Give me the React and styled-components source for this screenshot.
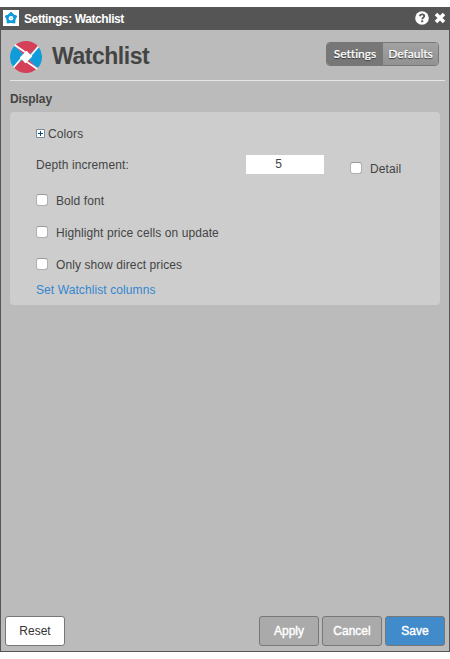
import React, { useState } from "react";
import styled, { createGlobalStyle } from "styled-components";

const Global = createGlobalStyle`
  * { box-sizing: border-box; }
  body { margin: 0; background: #fff; font: 12px/16px "Liberation Sans", Arial, sans-serif; color: #444; }
  button, input { font: inherit; }
`;

const Dialog = styled.div`
  display: flex;
  flex-direction: column;
  width: 450px;
  height: 645px;
  margin-top: 7px;
  border: 1px solid #555;
  border-top: 0;
  background: #bbb;
`;

const TitleBar = styled.header`
  display: flex;
  align-items: center;
  height: 23px;
  padding: 0 3px 0 2px;
  background: #555;
  color: #fff;
`;

const AppIcon = styled.svg`
  display: block;
  width: 16px;
  height: 16px;
  margin-top: -1px;
  background: #fff;
`;

const TitleText = styled.span`
  flex: 1;
  margin-left: 5px;
  font-weight: bold;
  letter-spacing: -0.4px;
`;

const TitleActions = styled.div`
  display: flex;
  align-items: center;
  gap: 5px;
  margin-top: -1px;
  svg { display: block; }
`;

const Heading = styled.div`
  display: flex;
  align-items: center;
  height: 51px;
  margin: 0 4px 0 9px;
  border-bottom: 1px solid #e6e6e6;
`;

const Logo = styled.svg`
  display: block;
  margin-top: 3px;
  width: 32px;
  height: 32px;
`;

const PageTitle = styled.h1`
  flex: 1;
  margin: 1px 0 0 10px;
  font-size: 23px;
  line-height: 30px;
  letter-spacing: -0.46px;
  color: #444;
`;

const Segments = styled.div`
  display: flex;
  width: 113px;
  height: 24px;
  margin: -3px 6px 0 0;
  border: 1px solid #777;
  border-radius: 4px;
  overflow: hidden;
`;

const Segment = styled.button`
  width: ${(p) => p.$width}px;
  padding: 0;
  border: 0;
  background: ${(p) => (p.$active ? "#777" : "linear-gradient(#a2a2a2, #929292)")};
  color: #fff;
  font: 500 12px/22px Lato, sans-serif;
  font-variant-ligatures: none;
  -webkit-text-stroke: 0.2px #fff;
  text-shadow: 0 1px 1px #333;
`;

const SectionTitle = styled.h2`
  margin: 10px 0 5px 9px;
  font-size: 12px;
  line-height: 16px;
  letter-spacing: -0.1px;
`;

const Panel = styled.section`
  display: flex;
  flex-direction: column;
  height: 193px;
  margin: 0 9px;
  padding: 14px 26px 0;
  border-radius: 4px;
  background: #cdcdcd;
  letter-spacing: 0.09px;
`;

const Expander = styled.div`
  display: flex;
  align-items: center;
  gap: 3px;
  height: 16px;
  svg { display: block; margin-top: -1px; }
`;

const DepthRow = styled.div`
  display: flex;
  height: 19px;
  margin: 13px 0 19px;
`;

const DepthLabel = styled.span`
  width: 210px;
  line-height: 20px;
`;

const DepthInput = styled.input`
  width: 78px;
  height: 19px;
  margin-right: 26px;
  padding: 0 13px 1px 0;
  border: 0;
  text-align: center;
  color: #444;
  background: #fff;
`;

const CheckLabel = styled.label`
  display: flex;
  align-items: center;
  height: 16px;
  margin-top: ${(p) => p.$top || 0}px;
  white-space: nowrap;
`;

const Checkbox = styled.input`
  appearance: none;
  width: 12px;
  height: 12px;
  margin: -2px 8px 0 0;
  border: 1px solid #b0b0b0;
  border-top-color: #999;
  border-radius: 3px;
  background: #fff;
  &:checked { background: #428bca; }
`;

const CheckList = styled.div`
  display: flex;
  flex-direction: column;
  gap: 16px;
`;

const ColumnsLink = styled.a`
  margin-top: 9px;
  color: #3486d0;
  text-decoration: none;
`;

const Footer = styled.footer`
  display: flex;
  gap: 3px;
  margin-top: auto;
  padding: 0 4px 5px;
`;

const Button = styled.button`
  width: 60px;
  height: 30px;
  padding: 0;
  margin-right: ${(p) => (p.$first ? "auto" : 0)};
  border: 1px solid #777;
  border-radius: 3px;
  background: ${(p) => p.$bg || "#aaa"};
  color: ${(p) => p.$color || "#fff"};
  -webkit-text-stroke: ${(p) => (p.$first ? 0 : "0.4px #fff")};
`;

function Check({ children, top }) {
  const [on, setOn] = useState(false);
  return (
    <CheckLabel $top={top}>
      <Checkbox type="checkbox" checked={on} onChange={() => setOn(!on)} />
      {children}
    </CheckLabel>
  );
}

export default function App() {
  const [depth, setDepth] = useState("5");
  return (
    <>
      <Global />
      <Dialog>
        <TitleBar>
          <AppIcon viewBox="0 0 16 16">
            <path fill="#109cd8" stroke="#109cd8" strokeWidth="1.500" strokeLinejoin="round" d="M8 3.200l4.700 3.300-1.600 5.700H4.900L3.300 6.500z" />
            <g fill="#109cd8">
              <circle cx="8" cy="3.500" r="1.500" />
              <circle cx="12.500" cy="6.500" r="1.500" />
              <circle cx="11" cy="12" r="1.500" />
              <circle cx="5" cy="12" r="1.500" />
              <circle cx="3.500" cy="6.500" r="1.500" />
            </g>
            <circle cx="8" cy="8.200" r="2.300" fill="#fff" />
            <circle cx="8" cy="8.200" r=".8" fill="#8acdec" />
          </AppIcon>
          <TitleText>Settings: Watchlist</TitleText>
          <TitleActions>
            <svg width="14" height="14" viewBox="0 0 14 14">
              <circle cx="7" cy="7" r="6.800" fill="#fff" />
              <path d="M4.700 5.200C5 3.800 5.900 3.300 7 3.300c1.300 0 2.300.7 2.300 1.800C9.300 6.500 7.200 6.500 7.200 8.300" fill="none" stroke="#555" strokeWidth="1.800" />
              <path d="M6.200 9.300h2v1.900h-2z" fill="#555" />
            </svg>
            <svg width="12" height="12" viewBox="0 0 12 12">
              <path d="M2 2l8 8m0-8l-8 8" stroke="#fff" strokeWidth="3.600" />
            </svg>
          </TitleActions>
        </TitleBar>
        <Heading>
          <Logo viewBox="0 0 32 32">
            <path fill="#d34058" d="M16 16L4.700 4.700A16 16 0 0 1 28.600 6.100z" />
            <path fill="#109cd8" d="M16 16L28.600 6.100A16 16 0 0 1 27.300 27.300z" />
            <path fill="#d34058" d="M16 16L27.300 27.300A16 16 0 0 1 3.400 25.900z" />
            <path fill="#109cd8" d="M16 16L3.400 25.900A16 16 0 0 1 4.700 4.700z" />
            <path fill="#fff" d="M16.500 9.800L22.200 15.500 15.500 22.200 9.800 16.500z" />
            <path fill="none" stroke="#fff" strokeWidth="1.700" d="M4.700 4L21.500 15.500M28.400 5.500L15 21.500M27.300 28L10.500 16.500M3.600 26.500L17 10.500" />
          </Logo>
          <PageTitle>Watchlist</PageTitle>
          <Segments>
            <Segment $active $width={56}>Settings</Segment>
            <Segment $width={55}>Defaults</Segment>
          </Segments>
        </Heading>
        <SectionTitle>Display</SectionTitle>
        <Panel>
          <Expander>
            <svg width="9" height="9" viewBox="0 0 9 9">
              <path d="M.5.5h8v8h-8z" fill="#fff" stroke="#7b8c99" />
              <path d="M2 4.500h5M4.500 2v5" stroke="#084b82" />
            </svg>
            Colors
          </Expander>
          <DepthRow>
            <DepthLabel>Depth increment:</DepthLabel>
            <DepthInput value={depth} onChange={(e) => setDepth(e.target.value)} />
            <Check top={6}>Detail</Check>
          </DepthRow>
          <CheckList>
            <Check>Bold font</Check>
            <Check>Highlight price cells on update</Check>
            <Check>Only show direct prices</Check>
          </CheckList>
          <ColumnsLink href="#">Set Watchlist columns</ColumnsLink>
        </Panel>
        <Footer>
          <Button $first $bg="#fff" $color="#333">Reset</Button>
          <Button>Apply</Button>
          <Button>Cancel</Button>
          <Button $bg="#428bca">Save</Button>
        </Footer>
      </Dialog>
    </>
  );
}
